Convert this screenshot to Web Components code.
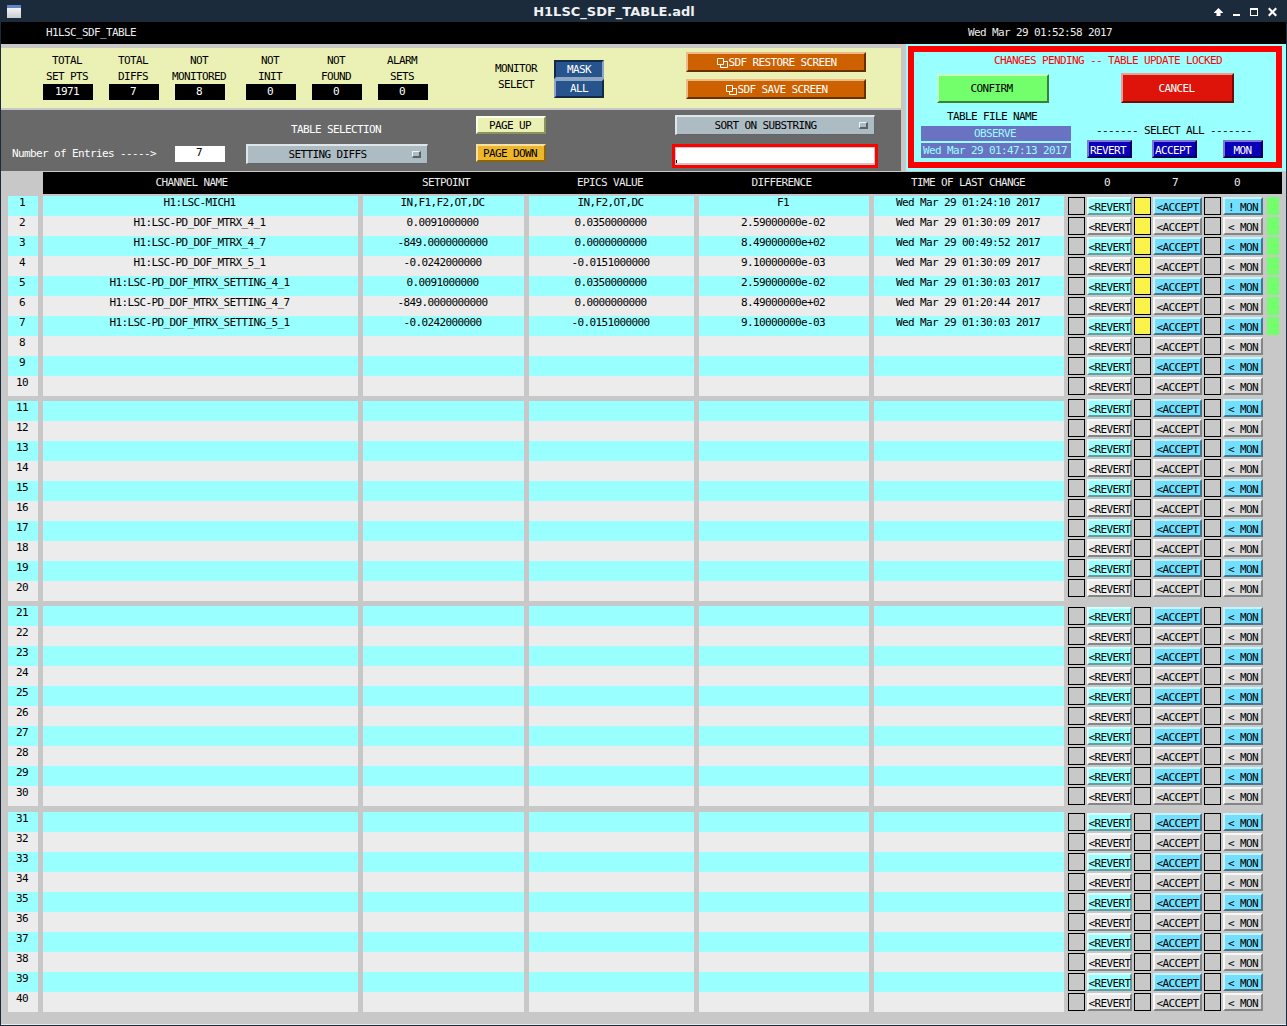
<!DOCTYPE html>
<html>
<head>
<meta charset="utf-8">
<title>H1LSC_SDF_TABLE.adl</title>
<style>
  html, body { margin: 0; padding: 0; background: #1c2b3c; }
  body {
    font-family: "DejaVu Sans Mono", "Liberation Mono", monospace;
    font-size: 11px;
    letter-spacing: -0.62px;
    line-height: 14px;
    color: #000;
  }
</style>
</head>
<body>
<sdf-window title="H1LSC_SDF_TABLE.adl">
  <sdf-topbar></sdf-topbar>
  <sdf-header></sdf-header>
  <sdf-table></sdf-table>
</sdf-window>

<script>
class SdfWindow extends HTMLElement {
  constructor() {
    super();
    const title = this.getAttribute("title") || "";
    this.attachShadow({ mode: "open" }).innerHTML = `
      <style>
        :host { display: block; width: 1287px; height: 1026px; box-sizing: border-box; background: #1c2b3c; padding: 0 1px 2px 1px; overflow: hidden; }
        .bar { display: flex; align-items: center; height: 22px; color: #fff; }
        .icon { margin-left: 6px; width: 14px; height: 13px; display: block; }
        .title { flex: 1; text-align: center; font: bold 13px "DejaVu Sans", sans-serif; letter-spacing: 0; color: #eef0f2; }
        .ctl { display: flex; width: 79px; gap: 0; }
        .ctl svg { display: block; }
        .body { background: #c8c8c8; height: 1002px; border-bottom: 1px solid #ececec; box-sizing: content-box; }
      </style>
      <div class="bar">
        <svg class="icon" viewBox="0 0 14 13">
          <defs><linearGradient id="g" x1="0" y1="0" x2="0" y2="1"><stop offset="0" stop-color="#ffffff"/><stop offset="1" stop-color="#c9ccd2"/></linearGradient></defs>
          <rect width="14" height="13" fill="url(#g)"/><rect width="14" height="3" fill="#5f86c4"/>
        </svg>
        <div class="title">${title}</div>
        <svg class="ctl" width="79" height="22" viewBox="0 0 79 22" fill="#fff">
          <path d="M11.5 8 L16 12.5 V13 H13.5 V16 H9.5 V13 H7 V12.5 Z"/>
          <rect x="26" y="14" width="7" height="2"/>
          <path d="M43 8h8v8h-8z M44 10v5h6v-5z" fill-rule="evenodd"/>
          <path d="M61 9l1.5-1.5 3 3 3-3L70 9l-3 3 3 3-1.5 1.5-3-3-3 3L61 15l3-3z"/>
        </svg>
      </div>
      <div class="body"><slot></slot></div>`;
  }
}

class SdfTopbar extends HTMLElement {
  constructor() {
    super();
    this.attachShadow({ mode: "open" }).innerHTML = `
      <style>
        :host { display: flex; height: 22px; background: #000; color: #ececec; line-height: 22px; }
        .name { margin-left: 45px; width: 922px; }
      </style>
      <div class="name">H1LSC_SDF_TABLE</div>
      <div>Wed Mar 29 01:52:58 2017</div>`;
  }
}

// motif style bevel button, colours come in through custom properties
class MedmBtn extends HTMLElement {
  constructor() {
    super();
    this.attachShadow({ mode: "open" }).innerHTML = `
      <style>
        :host {
          display: flex; align-items: center; justify-content: center; box-sizing: border-box;
          white-space: nowrap; flex: none;
          padding: var(--pad, 1px 2px 0 0);
          background: var(--bg, #c8c8c8);
          border-style: solid; border-width: 2px;
          border-color: var(--hi, #f4f4f4) var(--lo, #787878) var(--lo, #787878) var(--hi, #f4f4f4);
        }
      </style><slot></slot>`;
  }
}

class MedmMenu extends HTMLElement {
  constructor() {
    super();
    this.attachShadow({ mode: "open" }).innerHTML = `
      <style>
        :host {
          display: flex; align-items: center; box-sizing: border-box; flex: none;
          background: #adbbc3; border-style: solid; border-width: 2px 1px 1px 2px;
          border-color: #dfe6ea #5d676d #5d676d #dfe6ea;
        }
        .lbl { flex: 1; text-align: center; padding: 1px 5px 0 0; }
        .ind {
          width: 9px; height: 7px; box-sizing: border-box; margin-right: 6px; background: #adbbc3;
          border-style: solid; border-width: 1px 2px 2px 1px; border-color: #eef2f4 #59636a #59636a #eef2f4;
        }
      </style>
      <div class="lbl"><slot></slot></div><div class="ind"></div>`;
  }
}

class SdfStat extends HTMLElement {
  constructor() {
    super();
    this.attachShadow({ mode: "open" }).innerHTML = `
      <style>
        :host { display: flex; flex-direction: column; align-items: center; width: 50px; flex: none; line-height: 16px; white-space: nowrap; }
        .lab { padding-right: 2px; }
        .val { width: 50px; height: 16px; margin-top: -1px; box-sizing: border-box; padding-right: 2px; background: #000; color: #fff; text-align: center; }
      </style>
      <div class="lab">${this.getAttribute("top")}</div>
      <div class="lab">${this.getAttribute("bottom")}</div>
      <div class="val">${this.getAttribute("value")}</div>`;
  }
}

class SdfHeader extends HTMLElement {
  constructor() {
    super();
    const copyIcon = `<svg width="11" height="10" viewBox="0 0 11 10" fill="none" stroke="#fff" style="display:block;margin-left:2px"><path d="M.5.5h6v6h-6zM3.5 6.5v3h7v-6h-4"/></svg>`;
    this.attachShadow({ mode: "open" }).innerHTML = `
      <style>
        :host { display: flex; height: 127px; }
        .left { width: 900px; padding-top: 4px; flex: none; }
        .yellow { display: flex; height: 60px; background: #ebf1b5; margin-bottom: 2px; }
        .stats { display: flex; padding: 5px 0 0 42px; gap: 16px; }
        .stats sdf-stat:nth-child(4) { margin-left: 5px; }
        .mon-text { width: 60px; margin-left: 58px; padding-top: 13px; text-align: center; line-height: 16px; }
        .mon-btns { margin-left: 8px; padding-top: 12px; --bg: #27548d; --pad: 1px 0 0 0; }
        .mon-btns medm-btn { width: 50px; height: 19px; color: #fff; }
        .mask { --hi: #132a47; --lo: #8ea6c4; }
        .all { --hi: #8ea6c4; --lo: #132a47; }
        .screens { margin-left: 82px; padding-top: 4px; display: flex; flex-direction: column; gap: 7px; --bg: #cd6100; --hi: #eebb88; --lo: #663000; color: #fff; --pad: 1px 0 0 0; }
        .screens medm-btn { width: 180px; height: 20px; }
        .dark { display: flex; height: 61px; background: #696969; }
        .entries { display: flex; padding: 36px 0 0 11px; color: #fff; height: 16px; line-height: 15px; }
        .entries span { width: 163px; }
        .entries b { display: block; font-weight: normal; width: 50px; height: 16px; box-sizing: border-box; padding-right: 2px; line-height: 14px; background: #fff; color: #000; text-align: center; }
        .tsel { margin-left: 21px; width: 182px; color: #fff; text-align: center; padding-top: 13px; }
        .tsel span { padding-right: 2px; }
        .tsel medm-menu { margin-top: 7px; height: 20px; color: #000; width: 182px; }
        .pages { margin-left: 48px; padding-top: 6px; display: flex; flex-direction: column; gap: 10px; --pad: 2px 2px 0 0; }
        .pages medm-btn { width: 70px; height: 18px; }
        .up { --bg: #ebf1b5; --hi: #fbfde8; --lo: #8e925f; }
        .down { --bg: #eeb62b; --hi: #f8e0a0; --lo: #8a6610; }
        .sort { margin-left: 126px; padding-top: 5px; width: 206px; }
        .sort medm-menu { width: 200px; height: 20px; margin-left: 3px; }
        .search { position: relative; margin-top: 9px; width: 206px; height: 24px; box-sizing: border-box; border: 3px solid #fd0000; background: #fff; box-shadow: inset 1px 1px 0 #c8c8c8, inset -1px -2px 0 #c8c8c8; }
        .search i { position: absolute; left: 1px; bottom: 2px; width: 1px; height: 3px; background: #000; }
        .right { width: 380px; margin-left: 5px; flex: none; box-sizing: border-box; background: #99ffff; padding: 2px 4px 3px 2px; }
        .red { height: 122px; box-sizing: border-box; border: 6px solid #fd0000; }
        .pending { color: #fd0000; line-height: 16px; height: 16px; padding: 1px 0 0 80px; box-sizing: border-box; }
        .cols { display: flex; }
        .col-a { width: 166px; padding-top: 6px; flex: none; }
        .confirm { margin-left: 23px; width: 112px; height: 29px; --bg: #73ff6b; --hi: #c6ffc2; --lo: #3a8036; --pad: 0 3px 0 0; }
        .file { margin-top: 7px; height: 13px; text-align: center; padding-right: 10px; width: 156px; }
        .obs { margin: 3px 0 0 7px; width: 150px; height: 15px; box-sizing: border-box; padding-right: 2px; background: #6a73c1; color: #99ffff; text-align: center; line-height: 15px; }
        .obs + .obs { margin-top: 2px; }
        .col-b { flex: 1; padding-top: 5px; }
        .cancel { margin-left: 41px; width: 113px; height: 30px; color: #fff; --bg: #de1309; --hi: #f09a95; --lo: #6f0a05; }
        .select { margin: 20px 0 0 16px; line-height: 16px; height: 15px; white-space: pre; }
        .sel-btns { display: flex; margin-top: 2px; --bg: #0a00b8; --hi: #7d78d8; --lo: #05005c; color: #fff; --pad: 3px 3px 0 0; }
        .sel-btns medm-btn { width: 45px; height: 18px; }
        .sel-btns .r { margin-left: 7px; }
        .sel-btns .a { margin-left: 20px; }
        .sel-btns .m { margin-left: 26px; width: 40px; --pad: 3px 1px 0 0; }
      </style>
      <div class="left">
        <div class="yellow">
          <div class="stats">
            <sdf-stat top="TOTAL" bottom="SET PTS" value="1971"></sdf-stat>
            <sdf-stat top="TOTAL" bottom="DIFFS" value="7"></sdf-stat>
            <sdf-stat top="NOT" bottom="MONITORED" value="8"></sdf-stat>
            <sdf-stat top="NOT" bottom="INIT" value="0"></sdf-stat>
            <sdf-stat top="NOT" bottom="FOUND" value="0"></sdf-stat>
            <sdf-stat top="ALARM" bottom="SETS" value="0"></sdf-stat>
          </div>
          <div class="mon-text">MONITOR<br>SELECT</div>
          <div class="mon-btns">
            <medm-btn class="mask">MASK</medm-btn>
            <medm-btn class="all">ALL</medm-btn>
          </div>
          <div class="screens">
            <medm-btn>${copyIcon}SDF RESTORE SCREEN</medm-btn>
            <medm-btn>${copyIcon}SDF SAVE SCREEN</medm-btn>
          </div>
        </div>
        <div class="dark">
          <div class="entries"><span>Number of Entries -----&gt;</span><b>7</b></div>
          <div class="tsel"><span>TABLE SELECTION</span><medm-menu>SETTING DIFFS</medm-menu></div>
          <div class="pages">
            <medm-btn class="up">PAGE UP</medm-btn>
            <medm-btn class="down">PAGE DOWN</medm-btn>
          </div>
          <div class="sort">
            <medm-menu>SORT ON SUBSTRING</medm-menu>
            <div class="search"><i></i></div>
          </div>
        </div>
      </div>
      <div class="right">
        <div class="red">
          <div class="pending">CHANGES PENDING -- TABLE UPDATE LOCKED</div>
          <div class="cols">
            <div class="col-a">
              <medm-btn class="confirm">CONFIRM</medm-btn>
              <div class="file">TABLE FILE NAME</div>
              <div class="obs">OBSERVE</div>
              <div class="obs">Wed Mar 29 01:47:13 2017</div>
            </div>
            <div class="col-b">
              <medm-btn class="cancel">CANCEL</medm-btn>
              <div class="select">------- SELECT ALL -------</div>
              <div class="sel-btns">
                <medm-btn class="r">REVERT</medm-btn>
                <medm-btn class="a">ACCEPT</medm-btn>
                <medm-btn class="m">MON</medm-btn>
              </div>
            </div>
          </div>
        </div>
      </div>`;
  }
}

const DIFFS = [
  ["H1:LSC-MICH1", "IN,F1,F2,OT,DC", "IN,F2,OT,DC", "F1", "Wed Mar 29 01:24:10 2017"],
  ["H1:LSC-PD_DOF_MTRX_4_1", "0.0091000000", "0.0350000000", "2.59000000e-02", "Wed Mar 29 01:30:09 2017"],
  ["H1:LSC-PD_DOF_MTRX_4_7", "-849.0000000000", "0.0000000000", "8.49000000e+02", "Wed Mar 29 00:49:52 2017"],
  ["H1:LSC-PD_DOF_MTRX_5_1", "-0.0242000000", "-0.0151000000", "9.10000000e-03", "Wed Mar 29 01:30:09 2017"],
  ["H1:LSC-PD_DOF_MTRX_SETTING_4_1", "0.0091000000", "0.0350000000", "2.59000000e-02", "Wed Mar 29 01:30:03 2017"],
  ["H1:LSC-PD_DOF_MTRX_SETTING_4_7", "-849.0000000000", "0.0000000000", "8.49000000e+02", "Wed Mar 29 01:20:44 2017"],
  ["H1:LSC-PD_DOF_MTRX_SETTING_5_1", "-0.0242000000", "-0.0151000000", "9.10000000e-03", "Wed Mar 29 01:30:03 2017"],
];

class SdfTable extends HTMLElement {
  constructor() {
    super();
    // top gap before each group differs between the two sides of the screen
    const rowGaps = [0, 5, 5, 6];
    const ctlGaps = [1, 2, 8, 6];
    let rows = "", ctls = "";
    for (let g = 0; g < 4; g++) {
      let r = "", c = "";
      for (let i = g * 10; i < g * 10 + 10; i++) {
        const odd = i % 2 === 0;
        const d = DIFFS[i] || ["", "", "", "", ""];
        r += `<div class="row ${odd ? "odd" : ""}"><div>${i + 1}</div>` + d.map((t) => `<div>${t}</div>`).join("") + `</div>`;
        const on = i < 7;
        c += `<div class="ctl ${odd ? "odd" : ""}">
            <div class="box"></div>
            <medm-btn class="rv">&lt;REVERT</medm-btn>
            <div class="box ${on ? "on" : ""}"></div>
            <medm-btn class="ac">&lt;ACCEPT</medm-btn>
            <div class="box"></div>
            <medm-btn class="mn">${i === 0 ? "!" : "&lt;"} MON</medm-btn>
            ${on ? `<div class="led"></div>` : ""}
          </div>`;
      }
      rows += `<div style="margin-top:${rowGaps[g]}px">${r}</div>`;
      ctls += `<div style="margin-top:${ctlGaps[g]}px">${c}</div>`;
    }
    this.attachShadow({ mode: "open" }).innerHTML = `
      <style>
        :host { display: block; padding-top: 1px; }
        .head { display: flex; height: 22px; margin-left: 42px; width: 1239px; background: #000; color: #ececec; line-height: 22px; text-align: center; }
        .head div { flex: none; }
        .main { display: flex; margin-top: 2px; padding-left: 7px; }
        .rows { width: 1056px; flex: none; }
        .row { display: grid; grid-template-columns: 30px 315px 161px 165px 170px 190px; gap: 5px; height: 20px; line-height: 14px; }
        .row div { box-sizing: border-box; padding-right: 2px; background: #ececec; text-align: center; white-space: nowrap; }
        .row.odd div { background: #99ffff; }
        .ctls { margin-left: 4px; }
        .ctl { display: flex; height: 20px; gap: 2px; }
        .box { width: 17px; height: 18px; box-sizing: border-box; border: 1px solid #000; background: #c8c8c8; flex: none; }
        .box.on { background: #fbf34a; }
        medm-btn { height: 18px; --hi: #f8f8f8; --lo: #858585; --pad: 3px 0 0 0; }
        .rv { width: 45px; --bg: #ececec; }
        .ac { width: 49px; --bg: #dadada; }
        .mn { width: 40px; --bg: #dadada; }
        .odd .rv { --bg: #99ffff; --hi: #d6ffff; --lo: #5f9f9f; }
        .odd .ac, .odd .mn { --bg: #73dfff; --hi: #c7f2ff; --lo: #47758a; }
        .led { width: 12px; height: 18px; margin-left: 2px; background: #73ff6b; }
      </style>
      <div class="head">
        <div style="width:297px">CHANNEL NAME</div>
        <div style="width:212px">SETPOINT</div>
        <div style="width:116px">EPICS VALUE</div>
        <div style="width:227px">DIFFERENCE</div>
        <div style="width:146px">TIME OF LAST CHANGE</div>
        <div style="width:40px;margin-left:46px">0</div>
        <div style="width:40px;margin-left:28px">7</div>
        <div style="width:40px;margin-left:22px">0</div>
      </div>
      <div class="main">
        <div class="rows">${rows}</div>
        <div class="ctls">${ctls}</div>
      </div>`;
  }
}

customElements.define("sdf-window", SdfWindow);
customElements.define("sdf-topbar", SdfTopbar);
customElements.define("medm-btn", MedmBtn);
customElements.define("medm-menu", MedmMenu);
customElements.define("sdf-stat", SdfStat);
customElements.define("sdf-header", SdfHeader);
customElements.define("sdf-table", SdfTable);
</script>
</body>
</html>
